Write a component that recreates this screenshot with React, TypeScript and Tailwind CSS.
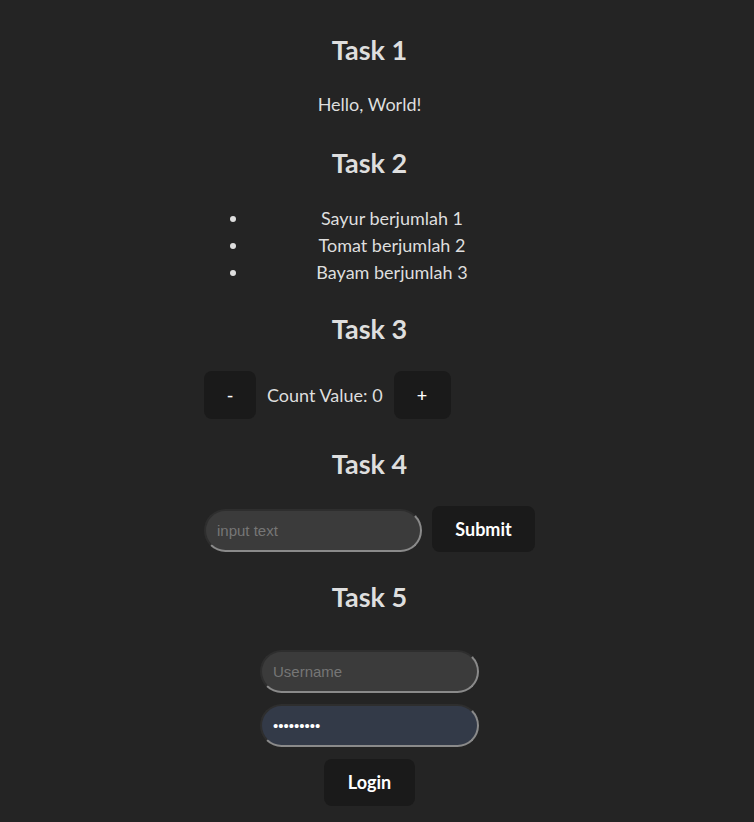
import { useState } from "react";

const items = [
  { name: "Sayur", qty: 1 },
  { name: "Tomat", qty: 2 },
  { name: "Bayam", qty: 3 },
];

const inputCls =
  "rounded-full border-2 border-solid border-t-[#2e2e2e] border-l-[#2e2e2e] border-b-[#8a8a8a] border-r-[#8a8a8a] px-[11px] text-[15px] text-white outline-none placeholder:text-[#767676] font-['Liberation_Sans',Arial,sans-serif]";

const btnCls =
  "rounded-lg bg-[#1a1a1a] text-white flex items-center justify-center";

export default function App() {
  const [count, setCount] = useState(0);
  const [text, setText] = useState("");

  return (
    <div className="min-h-screen bg-[#242424] text-[#dedede] font-['Lato','Noto_Sans',sans-serif] text-[18px] leading-[27px]">
      <div className="w-[739px] flex flex-col items-center text-center pt-8">
        {/* Task 1 */}
        <h2 className="text-[27px] leading-[36px] font-bold">Task 1</h2>
        <p className="mt-[23px]">Hello, World!</p>

        {/* Task 2 */}
        <h2 className="mt-[27px] text-[27px] leading-[36px] font-bold">Task 2</h2>
        <ul className="mt-6 w-[331px] pl-[45px] list-disc">
          {items.map((it) => (
            <li key={it.name}>
              {it.name} berjumlah {it.qty}
            </li>
          ))}
        </ul>

        {/* Task 3 */}
        <h2 className="mt-[25px] text-[27px] leading-[36px] font-bold">Task 3</h2>
        <div className="mt-6 w-[331px] flex items-center gap-[11px]">
          <button
            className={`${btnCls} w-[52px] h-12 font-medium`}
            onClick={() => setCount(count - 1)}
          >
            -
          </button>
          <span>Count Value: {count}</span>
          <button
            className={`${btnCls} w-[57px] h-12 font-medium`}
            onClick={() => setCount(count + 1)}
          >
            +
          </button>
        </div>

        {/* Task 4 */}
        <h2 className="mt-[27px] text-[27px] leading-[36px] font-bold">Task 4</h2>
        <div className="mt-6 w-[331px] flex items-end gap-[10px]">
          <input
            className={`${inputCls} w-[218px] h-[43px] bg-[#3b3b3b]`}
            placeholder="input text"
            value={text}
            onChange={(e) => setText(e.target.value)}
          />
          <button className={`${btnCls} w-[103px] h-[46px] font-bold`}>
            Submit
          </button>
        </div>

        {/* Task 5 */}
        <h2 className="mt-[27px] text-[27px] leading-[36px] font-bold">Task 5</h2>
        <form
          className="mt-[35px] flex flex-col items-center"
          onSubmit={(e) => e.preventDefault()}
        >
          <input
            className={`${inputCls} w-[219px] h-[43px] bg-[#3b3b3b]`}
            placeholder="Username"
          />
          <input
            type="password"
            className={`${inputCls} mt-[11px] w-[219px] h-[43px] bg-[#333a48]`}
            placeholder="Password"
            defaultValue="123456789"
          />
          <button className={`${btnCls} mt-[12px] w-[91px] h-[47px] font-bold`}>
            Login
          </button>
        </form>
      </div>
    </div>
  );
}
